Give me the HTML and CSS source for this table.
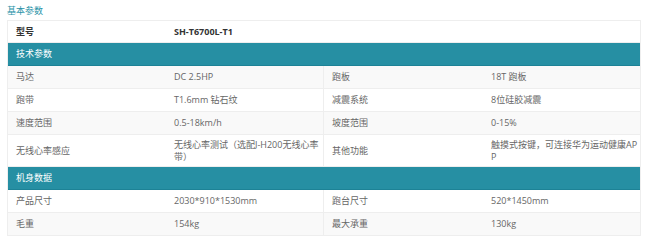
FILE: index.html
```html
<!DOCTYPE html>
<html lang="zh-CN">
<head>
<meta charset="utf-8">
<link rel="stylesheet" href="styles.css">
</head>
<body>
<div class="page">
  <div class="title">基本参数</div>
  <div class="spec">
    <div class="row model">
      <div class="cell label strong">型号</div>
      <div class="cell value strong wide">SH-T6700L-T1</div>
    </div>
    <div class="row head"><div class="cell">技术参数</div></div>
    <div class="row alt">
      <div class="cell label">马达</div>
      <div class="cell value">DC 2.5HP</div>
      <div class="cell label divider">跑板</div>
      <div class="cell value last">18T 跑板</div>
    </div>
    <div class="row">
      <div class="cell label">跑带</div>
      <div class="cell value">T1.6mm 钻石纹</div>
      <div class="cell label divider">减震系统</div>
      <div class="cell value last">8位硅胶减震</div>
    </div>
    <div class="row alt">
      <div class="cell label">速度范围</div>
      <div class="cell value">0.5-18km/h</div>
      <div class="cell label divider">坡度范围</div>
      <div class="cell value last">0-15%</div>
    </div>
    <div class="row tall">
      <div class="cell label">无线心率感应</div>
      <div class="cell value">无线心率测试（选配J-H200无线心率带）</div>
      <div class="cell label divider">其他功能</div>
      <div class="cell value last">触摸式按键，可连接华为运动健康APP</div>
    </div>
    <div class="row head"><div class="cell">机身数据</div></div>
    <div class="row">
      <div class="cell label">产品尺寸</div>
      <div class="cell value">2030*910*1530mm</div>
      <div class="cell label divider">跑台尺寸</div>
      <div class="cell value last">520*1450mm</div>
    </div>
    <div class="row alt">
      <div class="cell label">毛重</div>
      <div class="cell value">154kg</div>
      <div class="cell label divider">最大承重</div>
      <div class="cell value last">130kg</div>
    </div>
  </div>
</div>
</body>
</html>
```
FILE: styles.css
```css
html, body {
  margin: 0;
  padding: 0;
  background: #fff;
}
body {
  font-family: "Open Sans", "Noto Sans CJK SC", sans-serif;
  font-size: 9px;
  color: #666;
}
.page {
  padding: 2px 9px 0 7px;
}
.title {
  color: #2a93a8;
  line-height: 17px;
  height: 18px;
}
.spec {
  border: 1px solid #eee;
  border-bottom: none;
}
.row {
  display: grid;
  grid-template-columns: 158px 157px 160px 1fr;
  border-bottom: 1px solid #eee;
  background: #fff;
}
.row.alt {
  background: #f9f9f9;
}
.cell {
  padding: 0 3px 0 8px;
  min-height: 22px;
  display: flex;
  align-items: center;
  line-height: 12px;
  word-break: break-all;
}
.cell.last {
  padding-right: 0;
}
.row.tall .cell {
  min-height: 31px;
}
.divider {
  border-left: 1px solid #eee;
}
.wide {
  grid-column: 2 / 5;
}
.strong {
  font-weight: bold;
  color: #333;
}
.model .cell {
  min-height: 21px;
}
.row.head {
  display: block;
  background: #268fa3;
  border-bottom: 1px solid #1d8296;
  color: #fff;
}
.row.head .cell {
  min-height: 22px;
}
```
